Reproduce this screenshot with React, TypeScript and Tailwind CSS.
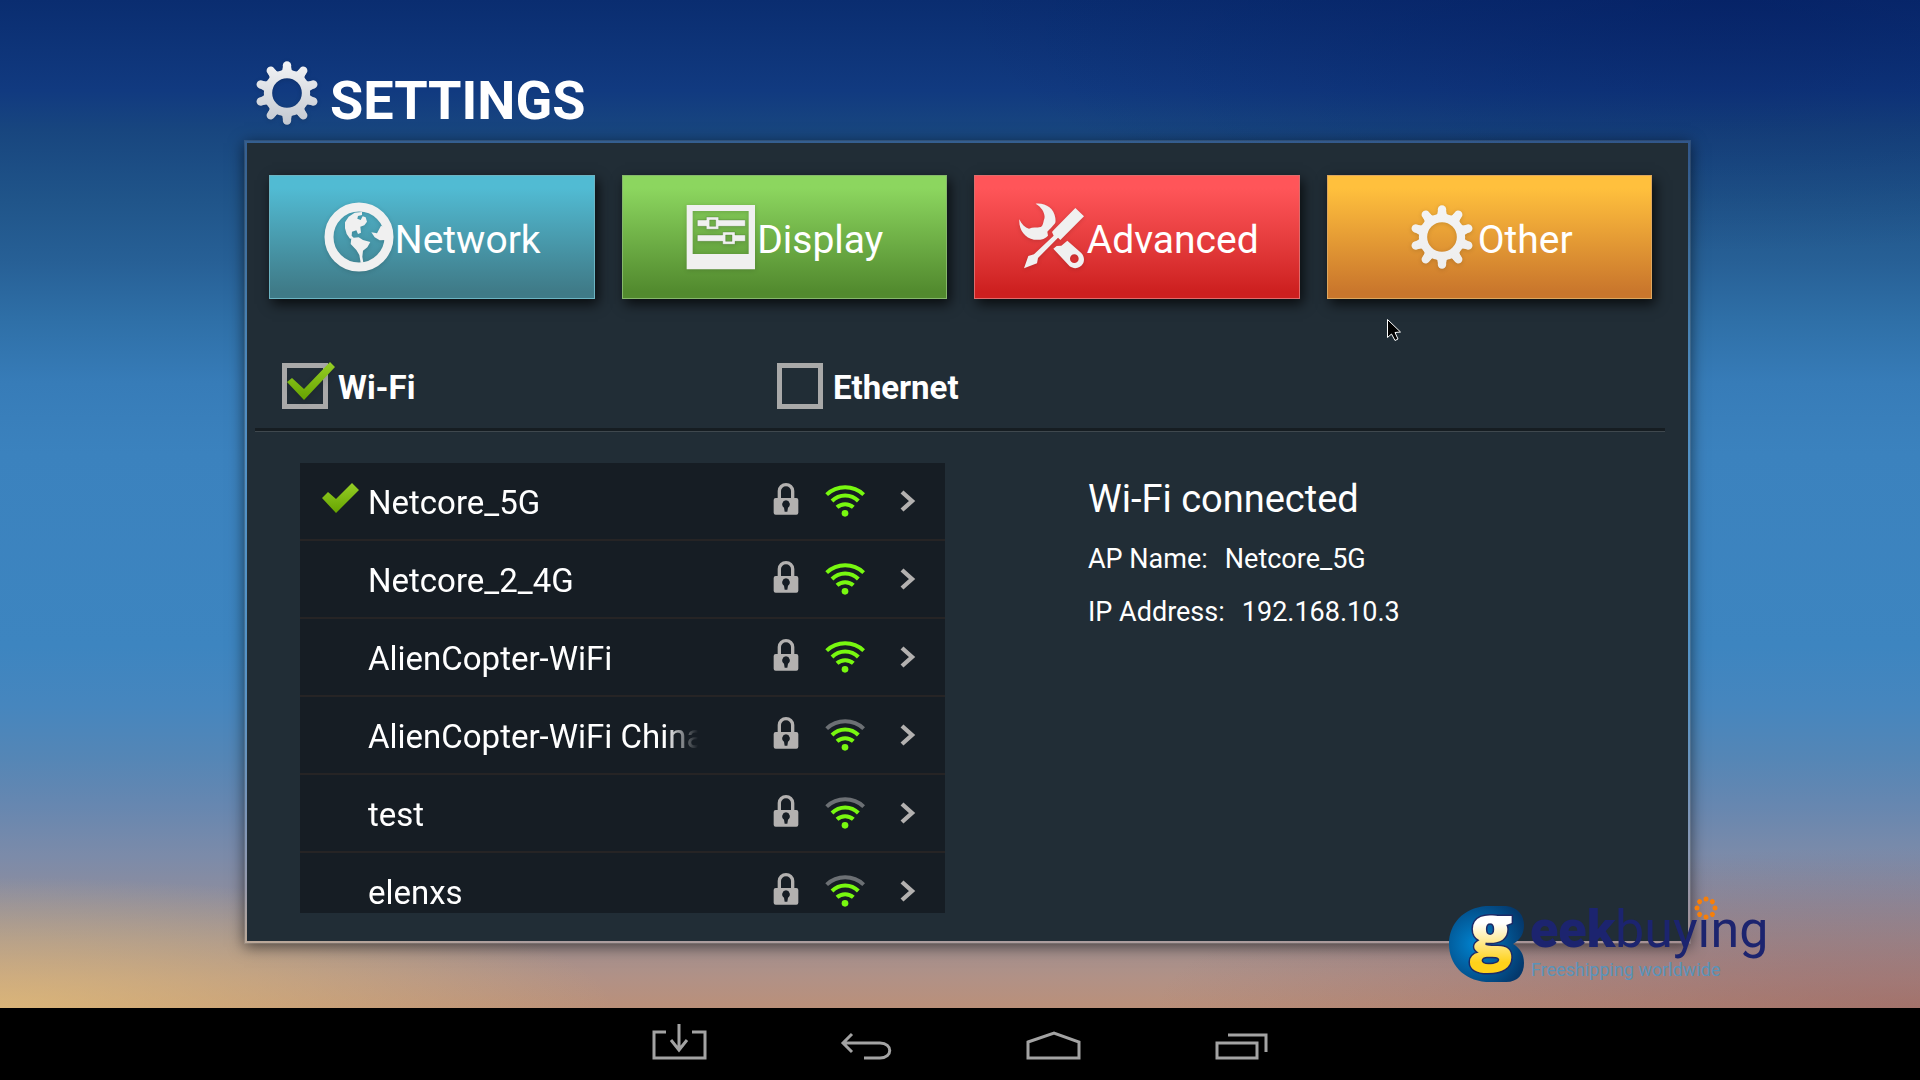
import { useState } from "react"
import type { ReactNode } from "react"

type TabKey = "network" | "display" | "advanced" | "other"

const GEAR_TEETH = [0, 36, 72, 108, 144, 180, 216, 252, 288, 324]

const GearIcon = ({ id, from, to }: { id: string; from: string; to: string }) => (
  <svg className="w-[72px] h-[72px] shrink-0 drop-shadow-sm" viewBox="-108 -108 216 216" aria-hidden="true">
    <defs>
      <linearGradient id={id} gradientUnits="userSpaceOnUse" x1="0" y1="-96" x2="0" y2="96">
        <stop offset="0" stopColor={from} />
        <stop offset="1" stopColor={to} />
      </linearGradient>
      <mask id={`${id}-shape`} maskUnits="userSpaceOnUse" x="-108" y="-108" width="216" height="216">
        <circle r="57" fill="none" stroke="#fff" strokeWidth="25" />
        {GEAR_TEETH.map((deg) => (
          <g key={deg} transform={`rotate(${deg})`}>
            <path d="M0 -62V-83" stroke="#fff" strokeWidth="25" strokeLinecap="round" />
            <path d="M-20 -64Q-12 -68 -12 -78H12Q12 -68 20 -64Z" fill="#fff" />
          </g>
        ))}
      </mask>
    </defs>
    <rect x="-108" y="-108" width="216" height="216" fill={`url(#${id})`} mask={`url(#${id}-shape)`} />
  </svg>
)

const GlobeIcon = () => (
  <svg className="w-[72px] h-[72px] shrink-0 drop-shadow-sm" viewBox="285 483 216 216" aria-hidden="true">
    <circle cx="393" cy="591" r="90" fill="none" stroke="#f0f0f0" strokeWidth="27" />
    <g fill="#f0f0f0">
      <path d="M351 547L362 530L380 518L402 516V525L390 528L388 536L398 540L404 529L413 532L417 545L409 556L397 560L399 578L390 582L385 571L372 575L371 587L378 595L366 596L356 582L351 565Z" />
      <path d="M370 594L392 592L405 600L427 606L418 622L405 632L403 650L406 668H398L394 645L385 630L368 612Z" />
      <path d="M430 577L447 580L459 557L472 563V600L455 601L440 592Z" />
    </g>
  </svg>
)

const SlidersIcon = () => (
  <svg className="w-[72px] h-[72px] shrink-0 drop-shadow-sm" viewBox="254 154 216 216" aria-hidden="true">
    <path
      fill="#f0f0f0"
      fillRule="evenodd"
      d="M259 166H464V359H259ZM277 184V313H445V184Z"
    />
    <path
      fill="#f0f0f0"
      fillRule="evenodd"
      stroke="#3f6f26"
      strokeOpacity=".5"
      strokeWidth="2"
      d="M291 211H318V202H355V211H435V230H355V239H318V230H291ZM328 211V230H346V211ZM291 256H367V247H404V256H435V275H404V284H367V275H291ZM376 256V275H395V256Z"
    />
  </svg>
)

const ToolsIcon = () => (
  <svg className="w-[72px] h-[72px] shrink-0 drop-shadow-sm" viewBox="165 154 216 216" aria-hidden="true">
    <g fill="#f0f0f0">
      <path d="M227 162C256 159 282 175 286 205C287 213 287 219 284 222C276 231 268 240 262 246L264 258C256 268 240 272 222 270C194 264 176 240 178 209C185 224 195 234 207 237C218 232 230 235 242 232C250 228 249 218 253 207C257 192 245 172 227 162Z" />
      <path d="M346 175L372 200L301 271L294 264L234 325L231 341L192 356L205 319L222 314L281 258L276 247L282 240Z" />
      <path fillRule="evenodd" d="M322 273L363 309C372 318 374 330 370 340C362 356 343 360 329 350L280 297L290 289L304 288ZM343 314A13 13 0 1 0 343 340A13 13 0 1 0 343 314Z" />
    </g>
  </svg>
)

const LockIcon = () => (
  <svg className="w-[26px] h-[34px] mb-1 shrink-0" viewBox="218 426 78 102" aria-hidden="true">
    <path d="M237 478V453a20 19 0 0 1 40 0V478" fill="none" stroke="#b3b1b0" strokeWidth="10" />
    <path
      fill="#b3b1b0"
      fillRule="evenodd"
      d="M226 474H288Q294 474 294 480V518Q294 524 288 524H226Q220 524 220 518V480Q220 474 226 474ZM257 481A12 12 0 0 0 251 503L253 515H261L263 503A12 12 0 0 0 257 481Z"
    />
  </svg>
)

const SignalIcon = ({ full }: { full: boolean }) => (
  <svg className="w-10 h-8 shrink-0" viewBox="376 435 120 96" fill="none" stroke="#78f810" strokeWidth="12" aria-hidden="true">
    <path d="M381 464A81 81 0 0 1 492 464" stroke={full ? "#78f810" : "#6c7074"} />
    <path d="M397 483A56 56 0 0 1 476 483" />
    <path d="M412 502A36 36 0 0 1 461 502" />
    <circle cx="436" cy="520" r="10" fill="#78f810" stroke="none" />
  </svg>
)

const ChevronIcon = () => (
  <svg className="w-4 h-6 shrink-0" viewBox="601 448 48 72" fill="none" aria-hidden="true">
    <path d="M607 457L637 484L607 511" stroke="#b3b1b0" strokeWidth="13" />
  </svg>
)

const TickGradient = ({ id }: { id: string }) => (
  <defs>
    <linearGradient id={id} x1="0" y1="0" x2="0" y2="1">
      <stop offset="0" stopColor="#96cf26" />
      <stop offset="1" stopColor="#66a300" />
    </linearGradient>
  </defs>
)

const ConnectedTick = () => (
  <svg className="w-[38px] h-8 mb-1.5 shrink-0" viewBox="0 0 38 32" role="img" aria-label="Connected">
    <TickGradient id="tick-small" />
    <path d="M1 16L7 10L15 17L31 1L38 8L15 31Z" fill="url(#tick-small)" />
  </svg>
)

function CheckOption({
  id,
  label,
  checked,
  onChange,
}: {
  id: string
  label: string
  checked: boolean
  onChange: (value: boolean) => void
}) {
  return (
    <div className="flex items-center gap-2.5 w-[495px]">
      <span className="relative block w-[46px] h-[46px]">
        <input
          id={id}
          type="checkbox"
          checked={checked}
          onChange={(e) => onChange(e.target.checked)}
          className="block w-full h-full appearance-none border-[5px] border-[#a9a9a9]"
        />
        {checked && (
          <svg
            className="absolute inset-0 w-full h-full overflow-visible pointer-events-none drop-shadow-md"
            viewBox="0 0 46 46"
            aria-hidden="true"
          >
            <TickGradient id="tick-large" />
            <path d="M5 19L10 15L22 26L48 -1L53 4L22 37Z" fill="url(#tick-large)" />
          </svg>
        )}
      </span>
      <label htmlFor={id} className="pt-1 text-[33px] leading-[42px] font-bold">
        {label}
      </label>
    </div>
  )
}

const tabs: { key: TabKey; label: string; icon: ReactNode; color: string }[] = [
  { key: "network", label: "Network", icon: <GlobeIcon />, color: "from-[#51bbd3] to-[#3f7a87] border-[#6cb4c2]" },
  { key: "display", label: "Display", icon: <SlidersIcon />, color: "from-[#8cd65f] to-[#528a2e] border-[#86b86a]" },
  { key: "advanced", label: "Advanced", icon: <ToolsIcon />, color: "from-[#ff5559] to-[#cd1f1f] border-[#df6b6b]" },
  { key: "other", label: "Other", icon: <GearIcon id="gear-other" from="#f4f4f4" to="#ededed" />, color: "from-[#ffc03d] to-[#c9762c] border-[#dda65e]" },
]

const networks = [
  { name: "Netcore_5G", full: true, connected: true },
  { name: "Netcore_2_4G", full: true },
  { name: "AlienCopter-WiFi", full: true },
  { name: "AlienCopter-WiFi China", full: false },
  { name: "test", full: false },
  { name: "elenxs", full: false },
]

const navIcons = [
  { label: "Hide bar", d: "M16 15H4V41H55V15H42M29 7V32M21 23L29 33L37 23" },
  { label: "Back", d: "M15 17L6 26L15 35M6 26H43C56 26 56 41 43 41H27" },
  { label: "Home", d: "M4 25L30 16L55 25V41H4Z" },
  { label: "Recent apps", d: "M6 26H46V41H6ZM17 18H55V35" },
]

const RING_DOTS = [0, 45, 90, 135, 180, 225, 270, 315]

function BrandMark() {
  return (
    <div className="absolute right-[155px] bottom-6 flex gap-1 pointer-events-none" aria-label="geekbuying">
      <svg className="w-[78px] h-[80px] overflow-visible" viewBox="0 0 78 80">
        <defs>
          <radialGradient id="brand-blue" cx=".35" cy=".5" r=".7">
            <stop offset="0" stopColor="#0083cf" />
            <stop offset="1" stopColor="#04386c" />
          </radialGradient>
          <linearGradient id="brand-gold" x1="0" y1="0" x2="0" y2="1">
            <stop offset=".45" stopColor="#ffffff" />
            <stop offset=".85" stopColor="#ffd21a" />
          </linearGradient>
        </defs>
        <path
          d="M38 2H58C70 3 76 12 76 21C76 30 72 36 65 40C72 44 76 50 76 59C76 70 70 78 58 78H38C15 76 1 60 1 40S15 4 38 2Z"
          fill="url(#brand-blue)"
        />
        <text
          x="43"
          y="52"
          textAnchor="middle"
          fontFamily="Open Sans, sans-serif"
          fontWeight="800"
          fontSize="72"
          fill="url(#brand-gold)"
          stroke="#1d2a66"
          strokeWidth="3"
          paintOrder="stroke"
        >
          g
        </text>
      </svg>
      <div className="relative w-[235px]">
        <p className="text-[52px] leading-[52px] text-[#1c246f]">
          <span className="font-black">eek</span>buyıng
        </p>
        <p className="text-[18px] leading-5 pl-px mt-1 text-[#5a93b9]">Freeshipping worldwide</p>
        <svg className="absolute left-[164px] -top-2 w-6 h-6" viewBox="-12 -12 24 24" aria-hidden="true">
          {RING_DOTS.map((deg) => (
            <circle key={deg} cy="-9" r="2.500" fill="#f77f0a" transform={`rotate(${deg})`} />
          ))}
        </svg>
      </div>
    </div>
  )
}

export default function App() {
  const [active, setActive] = useState<TabKey>("network")
  const [wifi, setWifi] = useState(true)
  const [ethernet, setEthernet] = useState(false)

  return (
    <div className="min-h-screen flex flex-col bg-black text-white font-[Roboto,sans-serif]">
      <main className="relative flex-1 pl-[244px] pr-[229px] pb-16 bg-[radial-gradient(ellipse_32%_13%_at_0%_100%,rgba(235,200,120,0.65),rgba(235,200,120,0)),radial-gradient(ellipse_40%_16%_at_100%_100%,rgba(120,60,80,0.35),rgba(120,60,80,0)),radial-gradient(ellipse_40%_25%_at_90%_0%,rgba(0,20,90,0.4),rgba(0,20,90,0)),linear-gradient(180deg,#0a2d70_0%,#113a80_9%,#18467f_13%,#20558a_20%,#276096_26%,#2f70a8_32%,#377cb8_38%,#3b82be_45%,#3d85c0_64%,#4686be_70%,#5486b6_75%,#6787b0_80%,#7c8ba9_85%,#8d8d9e_89%,#9f9092_93%,#b19186_97%,#ba907a_100%)]">
        <header className="flex gap-[7px] h-[140px] pl-[7px] pt-[57px]">
          <GearIcon id="gear-title" from="#f3f4f6" to="#c3c8d0" />
          <h1 className="pt-2 text-[54px] leading-[72px] font-bold">SETTINGS</h1>
        </header>

        <section className="pt-8 pb-7 border-[3px] border-white/12 bg-[#212d36] bg-clip-padding shadow-[0_3px_14px_rgba(0,0,0,0.55)]">
          <nav className="grid grid-cols-4 gap-[27px] pl-[22px] pr-9">
            {tabs.map((tab) => (
              <button
                key={tab.key}
                type="button"
                aria-pressed={active === tab.key}
                onClick={() => setActive(tab.key)}
                className={`flex items-center justify-center h-[124px] border bg-linear-to-b from-10% to-95% shadow-[3px_5px_12px_rgba(0,0,0,0.75)] ${tab.color}`}
              >
                {tab.icon}
                <span className="pt-1.5 text-[39px] leading-[48px]">{tab.label}</span>
              </button>
            ))}
          </nav>

          <div className="flex mt-16 pl-[35px]">
            <CheckOption id="wifi" label="Wi-Fi" checked={wifi} onChange={setWifi} />
            <CheckOption id="ethernet" label="Ethernet" checked={ethernet} onChange={setEthernet} />
          </div>

          <hr className="mt-[19px] ml-2 mr-[23px] h-1 border-t-[3px] border-b border-t-[#161d22] border-b-[#3f484e]" />

          <div className="flex mt-[31px] pl-[53px] gap-[143px]">
            <ul className="w-[645px] h-[450px] overflow-hidden bg-[#161d24]">
              {networks.map((net) => (
                <li key={net.name} className="border-b-2 border-[#262425]">
                  <button type="button" className="flex items-center w-full h-[76px] pl-[21px] pr-[29px] text-left">
                    <span className="w-[38px] mr-[9px] shrink-0">{net.connected && <ConnectedTick />}</span>
                    <span className="w-[330px] pt-1 overflow-hidden whitespace-nowrap text-[33px] leading-[42px] mask-r-from-90% mask-r-to-100%">
                      {net.name}
                    </span>
                    <span className="flex flex-1 items-center justify-end">
                      <LockIcon />
                      <span className="ml-[26px] mr-[35px]">
                        <SignalIcon full={net.full} />
                      </span>
                      <ChevronIcon />
                    </span>
                  </button>
                </li>
              ))}
            </ul>

            <div className="pt-[11px]">
              <h2 className="mb-[9px] text-[38px] leading-[50px]">Wi-Fi connected</h2>
              <dl className="text-[27px] leading-[53px]">
                <div className="flex gap-[17px]">
                  <dt>AP Name:</dt>
                  <dd>Netcore_5G</dd>
                </div>
                <div className="flex gap-[17px]">
                  <dt>IP Address:</dt>
                  <dd>192.168.10.3</dd>
                </div>
              </dl>
            </div>
          </div>
        </section>

        {/* Mouse pointer */}
        <svg className="absolute left-[1386px] top-[318px] w-4 h-6 pointer-events-none" viewBox="0 0 16 24" aria-hidden="true">
          <path d="M1.500 1.500V19.500L5.500 16L9 22.500L12 21L9 14.500L14.500 14Z" fill="#000" stroke="#fff" strokeWidth="1" />
        </svg>

        <BrandMark />
      </main>

      {/* System bar */}
      <footer className="flex justify-center h-18 bg-black">
        {navIcons.map((item) => (
          <button key={item.label} type="button" aria-label={item.label} className="flex items-center justify-center w-[187px]">
            <svg className="w-[60px] h-[54px]" viewBox="0 0 60 54" fill="none" stroke="#a3a3a3" strokeWidth="3" aria-hidden="true">
              <path d={item.d} />
            </svg>
          </button>
        ))}
      </footer>
    </div>
  )
}
